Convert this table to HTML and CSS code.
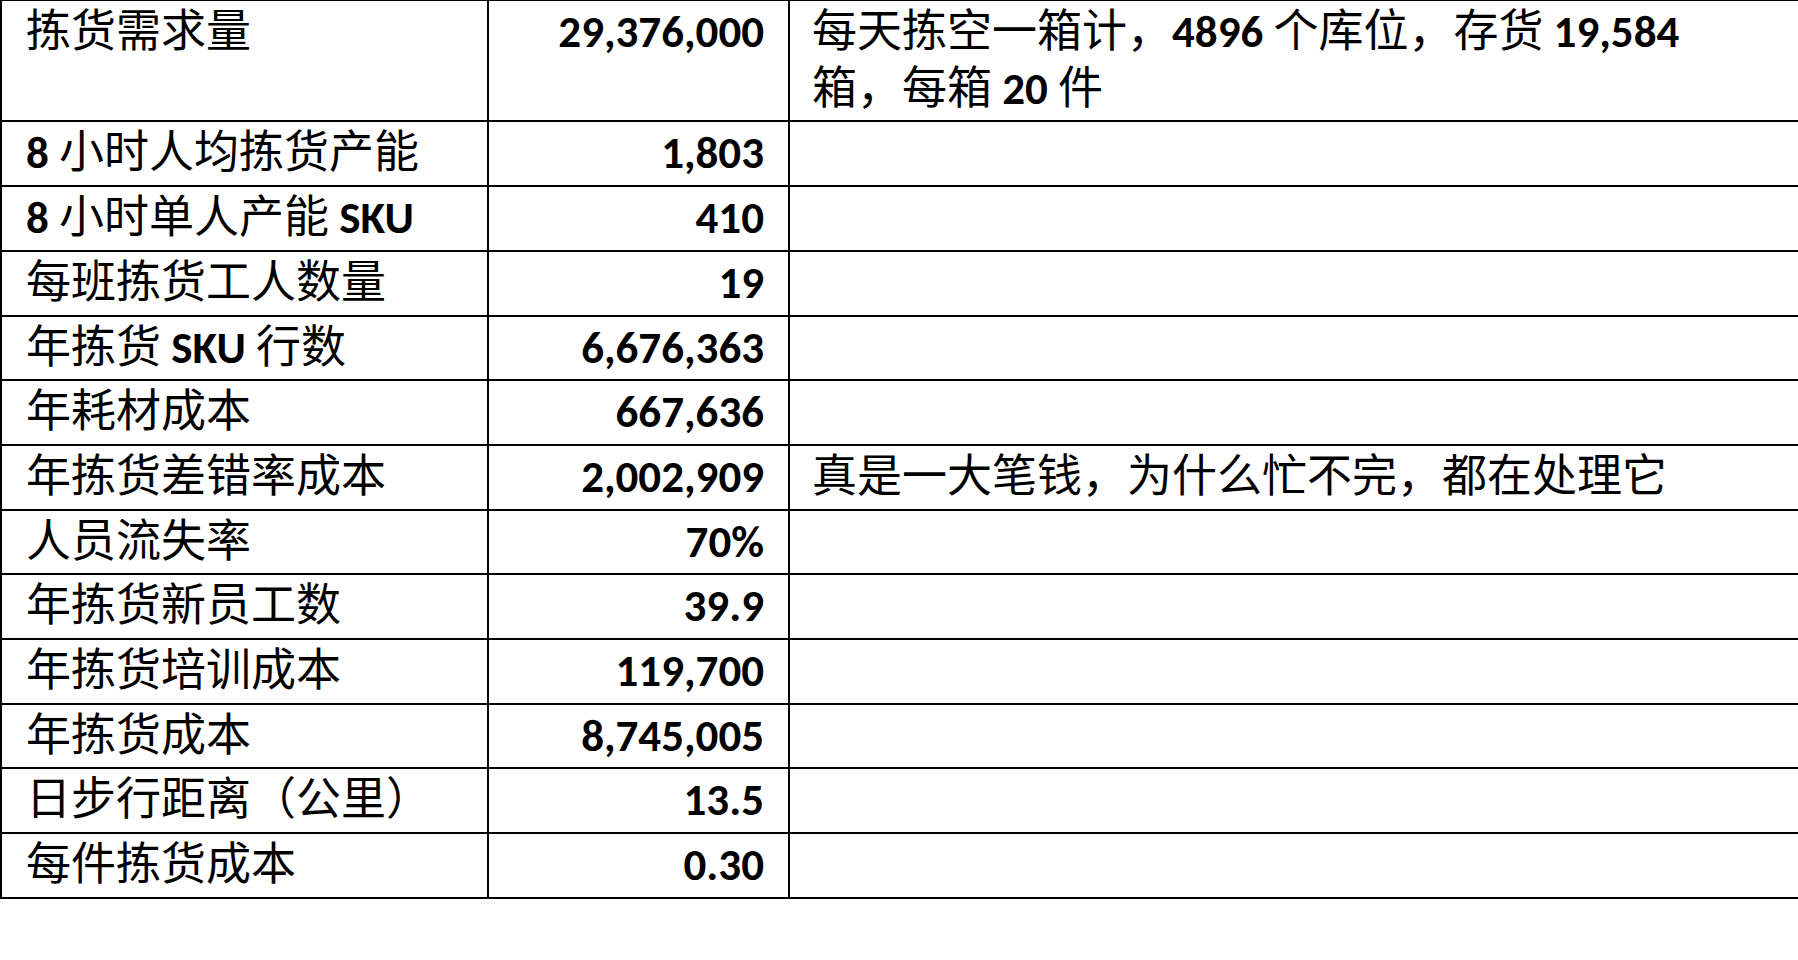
FILE: index.html
```html
<!DOCTYPE html>
<html lang="zh-CN">
<head>
<meta charset="utf-8">
<title>拣货成本</title>
<link rel="stylesheet" href="styles.css">
</head>
<body>
<table class="sheet">
  <colgroup>
    <col class="col-label">
    <col class="col-value">
    <col class="col-note">
  </colgroup>
  <tbody>
    <tr><td class="label">拣货需求量</td><td class="value">29,376,000</td><td class="note">每天拣空一箱计，<span class="lat">4896</span> 个库位，存货 <span class="lat">19,584</span><br>箱，每箱 <span class="lat">20</span> 件</td></tr>
    <tr><td class="label"><span class="lat">8</span> 小时人均拣货产能</td><td class="value">1,803</td><td class="note"></td></tr>
    <tr><td class="label"><span class="lat">8</span> 小时单人产能 <span class="lat">SKU</span></td><td class="value">410</td><td class="note"></td></tr>
    <tr><td class="label">每班拣货工人数量</td><td class="value">19</td><td class="note"></td></tr>
    <tr><td class="label">年拣货 <span class="lat">SKU</span> 行数</td><td class="value">6,676,363</td><td class="note"></td></tr>
    <tr><td class="label">年耗材成本</td><td class="value">667,636</td><td class="note"></td></tr>
    <tr><td class="label">年拣货差错率成本</td><td class="value">2,002,909</td><td class="note">真是一大笔钱，为什么忙不完，都在处理它</td></tr>
    <tr><td class="label">人员流失率</td><td class="value">70%</td><td class="note"></td></tr>
    <tr><td class="label">年拣货新员工数</td><td class="value">39.9</td><td class="note"></td></tr>
    <tr><td class="label">年拣货培训成本</td><td class="value">119,700</td><td class="note"></td></tr>
    <tr><td class="label">年拣货成本</td><td class="value">8,745,005</td><td class="note"></td></tr>
    <tr><td class="label">日步行距离（公里）</td><td class="value">13.5</td><td class="note"></td></tr>
    <tr><td class="label">每件拣货成本</td><td class="value">0.30</td><td class="note"></td></tr>
  </tbody>
</table>
</body>
</html>
```
FILE: styles.css
```css
html, body {
  margin: 0;
  padding: 0;
  background: #ffffff;
}

body {
  font-family: Carlito, Lato, "Noto Sans CJK SC", sans-serif;
  font-size: 45px;
  color: #000000;
}

.sheet {
  border-collapse: collapse;
  width: 1800px;
  table-layout: fixed;
}

.col-label { width: 487px; }
.col-value { width: 301px; }

.sheet td {
  border: 2px solid #000000;
  padding: 3px 24px;
  line-height: 56.7px;
  vertical-align: top;
  white-space: nowrap;
}

.sheet tr:first-child td { border-top-width: 1px; }
.sheet td.note { border-right: none; padding-left: 22px; }

.value {
  text-align: right;
  font-weight: 600;
}

.lat { font-weight: 600; }
```
